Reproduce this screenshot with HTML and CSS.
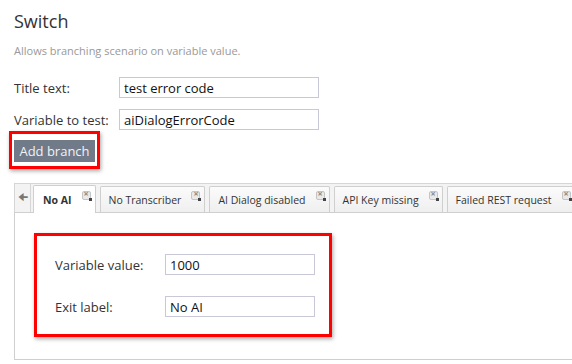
FILE: index.html
```html
<!DOCTYPE html>
<html lang="en">
<head>
    <meta charset="UTF-8">
    <title>Switch</title>
    <link rel="stylesheet" href="styles.css">
</head>
<body>
    <div class="page">
        <h1 class="title">Switch</h1>
        <p class="desc">Allows branching scenario on variable value.</p>

        <div class="form">
            <label class="label">Title text:</label>
            <input class="field" type="text" value="test error code">
            <label class="label">Variable to test:</label>
            <input class="field" type="text" value="aiDialogErrorCode">
        </div>

        <div class="mark mark-button">
            <button class="add-button">Add branch</button>
        </div>

        <div class="tabs">
            <div class="tab-bar">
                <div class="tab-arrow">&#129032;</div>
                <div class="tab active">No AI <span class="tab-close"></span></div>
                <div class="tab">No Transcriber <span class="tab-close"></span></div>
                <div class="tab">AI Dialog disabled <span class="tab-close"></span></div>
                <div class="tab">API Key missing <span class="tab-close"></span></div>
                <div class="tab">Failed REST request <span class="tab-close"></span></div>
                <div class="tab tab-more"></div>
            </div>
            <div class="tab-panel">
                <div class="mark mark-panel">
                    <div class="form form-inner">
                        <label class="label">Variable value:</label>
                        <input class="field" type="text" value="1000">
                        <label class="label">Exit label:</label>
                        <input class="field" type="text" value="No AI">
                    </div>
                </div>
            </div>
        </div>
    </div>
</body>
</html>
```
FILE: styles.css
```css
html, body {
    margin: 0;
    overflow: hidden;
    background: #ffffff;
}
body {
    font-family: 'Open Sans', 'Noto Sans', sans-serif;
    color: #333333;
    font-size: 13px;
}
.page {
    padding: 8px 0 0 14px;
    width: 620px;
}
.title {
    margin: 0;
    font-size: 18px;
    font-weight: normal;
    line-height: 26px;
    color: #333333;
}
.desc {
    margin: 9px 0 0;
    font-size: 11px;
    color: #999999;
}
.form {
    display: grid;
    grid-template-columns: 105px 200px;
    row-gap: 11px;
    align-items: center;
    margin-top: 19px;
}
.label {
    color: #333333;
    font-size: 13px;
}
.field {
    box-sizing: border-box;
    height: 21px;
    border: 1px solid #c8c8d6;
    padding: 0 4px;
    font-family: inherit;
    font-size: 13px;
    color: #111111;
    outline: none;
}
.mark {
    border: 3px solid #ff0000;
    box-shadow: 1px 2px 4px rgba(0, 0, 0, 0.35);
}
.mark-button {
    display: inline-block;
    margin: 1px 0 0 -5px;
    padding: 6px 2px 4px 2px;
}
.add-button {
    display: block;
    width: 81px;
    height: 22px;
    background: #707a89;
    border: none;
    color: #f2f2f2;
    font-family: inherit;
    font-size: 13px;
    padding: 0;
}
.tabs {
    margin-top: 14px;
}
.tab-bar {
    display: flex;
    align-items: flex-end;
    border-top: 1px solid #d6d6d6;
    background: #f3f3f3;
    height: 30px;
    border-bottom: 1px solid #cfcfcf;
    box-sizing: border-box;
}
.tab-arrow {
    width: 17px;
    height: 28px;
    display: flex;
    align-items: center;
    justify-content: center;
    color: #777777;
    font-size: 11px;
    border-left: 1px solid #d6d6d6;
    border-right: 1px solid #d6d6d6;
    box-sizing: border-box;
}
.tab {
    display: flex;
    align-items: center;
    gap: 10px;
    height: 26px;
    margin-left: 4px;
    padding: 0 4px 0 8px;
    border: 1px solid #cfcfcf;
    border-bottom: none;
    border-radius: 2px 2px 0 0;
    background: linear-gradient(#fbfbfb, #efefef);
    font-size: 10.5px;
    color: #333333;
    white-space: nowrap;
    box-sizing: border-box;
}
.tab.active {
    background: #ffffff;
    font-weight: bold;
    height: 28px;
    margin-bottom: -1px;
    padding-left: 9px;
    margin-left: 2px;
}
.tab-more {
    width: 40px;
}
.tab-close {
    position: relative;
    width: 7px;
    height: 7px;
    margin-top: -9px;
    border: 1px solid #c4c4c4;
    border-radius: 2px;
    background: #e9e9e9;
}
.tab-close::before {
    content: "\00d7";
    position: absolute;
    left: 1px;
    top: -5px;
    font-size: 9px;
    font-weight: bold;
    color: #8a8a8a;
}
.tab-close::after {
    content: "";
    position: absolute;
    right: -2px;
    bottom: -2px;
    width: 3px;
    height: 3px;
    background: #444444;
}
.tab-panel {
    border-left: 1px solid #cfcfcf;
    border-bottom: 1px solid #cfcfcf;
    height: 147px;
    padding: 20px 0 0 19px;
    box-sizing: border-box;
}
.mark-panel {
    width: 298px;
    height: 104px;
    box-sizing: border-box;
    padding: 18px 0 0 18px;
}
.form-inner {
    margin-top: 0;
    grid-template-columns: 110px 150px;
    row-gap: 21px;
}
```
